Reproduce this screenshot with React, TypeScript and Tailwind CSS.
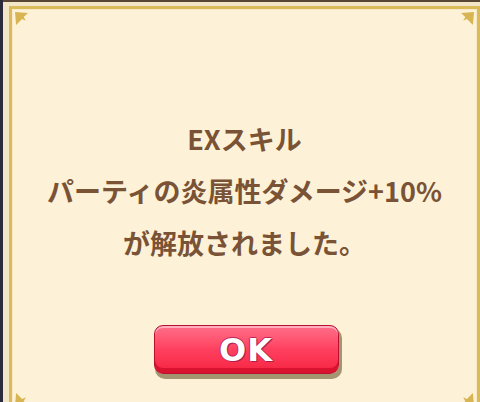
import React from "react";

function Corner({ className }: { className: string }) {
  return (
    <svg
      className={className}
      width="13"
      height="13"
      viewBox="0 0 12 12"
    >
      <polygon points="0,0 12,1 8,4.5 10,8 6.5,6.5 4,9 1,12" fill="#d8b552" />
    </svg>
  );
}

export default function App() {
  return (
    <div
      className="w-[480px] h-[402px] overflow-hidden bg-[#2a2c3e]"
      style={{ fontFamily: '"Noto Sans CJK JP", "Noto Sans", sans-serif' }}
    >
      <div className="ml-[3px] w-[483px] h-[420px] border-t-2 border-[#5a4634] bg-[#f3e6c6] pt-[4px] px-[6px]">
        <div className="relative h-[406px] border-[3px] border-[#dbba5c] bg-[#fdf2d8]">
          <div className="absolute inset-0 border border-[#f7e9c4]" />
          <Corner className="absolute left-[3px] top-[3px]" />
          <Corner className="absolute right-[3px] top-[3px] -scale-x-100" />
          <Corner className="absolute left-[3px] bottom-[3px] -scale-y-100" />
          <Corner className="absolute right-[3px] bottom-[3px] -scale-100" />
          <div className="flex flex-col items-center pt-[104px]">
            <div className="flex flex-col items-center text-[27px] leading-[52px] font-bold text-[#7a5336]">
              <div>EXスキル</div>
              <div>パーティの炎属性ダメージ+10%</div>
              <div>が解放されました。</div>
            </div>
            <div className="mt-[56px] ml-[3px] rounded-[9px] shadow-[2px_4px_0_1px_rgba(125,110,70,0.7)]">
              <div className="w-[185px] h-[49px] rounded-[9px] border border-[#b8102e] bg-gradient-to-b from-[#ff6d89] via-[#ff3f5f] to-[#f5223f] shadow-[inset_0_-5px_0_0_#d8122f,inset_0_2px_0_0_rgba(255,190,205,0.8)] flex items-center justify-center">
                <span
                  className="text-[32px] font-bold text-white leading-none tracking-[1px]"
                  style={{
                    fontFamily: '"DejaVu Sans", sans-serif',
                    textShadow:
                      "0 0 1px #9c1846, 1px 1px 0 #b21e52, -1px 0 0 #c02a5c, 0 -1px 0 #c02a5c",
                  }}
                >
                  OK
                </span>
              </div>
            </div>
          </div>
        </div>
      </div>
    </div>
  );
}
